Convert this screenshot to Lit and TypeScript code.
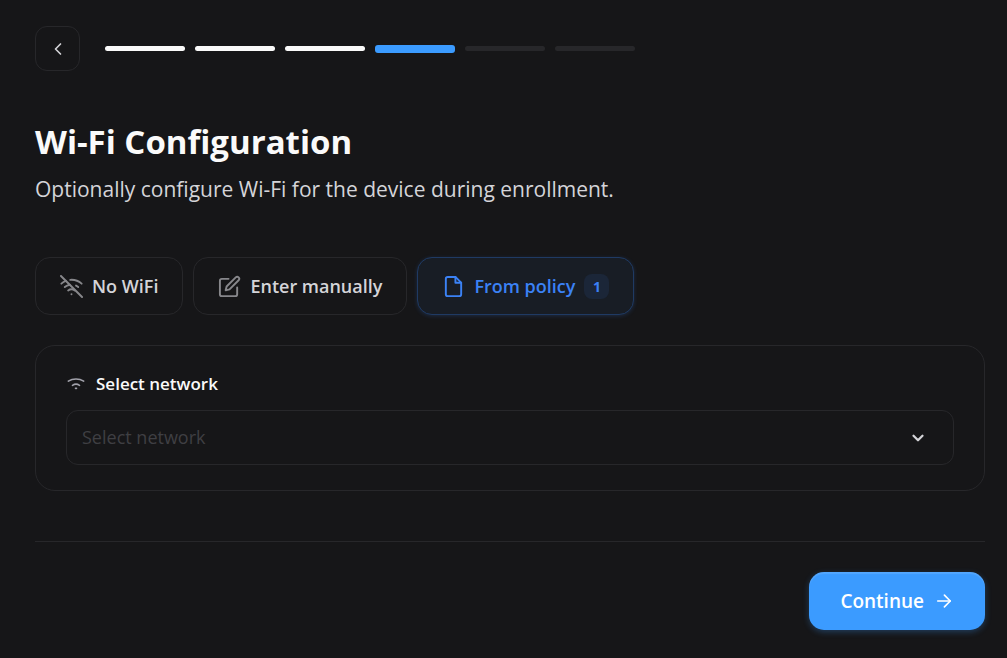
import { LitElement, html, css, svg } from "lit";
import { customElement, property, state } from "lit/decorators.js";
import { classMap } from "lit/directives/class-map.js";

type Mode = "none" | "manual" | "policy";

const icons = {
  back: svg`<path d="m15 18-6-6 6-6" />`,
  down: svg`<path d="m6 9 6 6 6-6" />`,
  arrow: svg`<path d="M4.5 12h15" /><path d="m12.5 5 7 7-7 7" />`,
  wifi: svg`<path d="M2.8 8.6a15 12.5 0 0 1 18.4 0" /><path d="M7.8 13.6a7 6 0 0 1 8.4 0" /><path d="M11.4 17.2h1.2" />`,
  wifiOff: svg`<path d="m1 1 22 22" /><path d="M16.72 11.06A10.94 10.94 0 0 1 19 12.55" /><path d="M5 12.55a10.94 10.94 0 0 1 5.17-2.39" /><path d="M10.71 5.05A16 16 0 0 1 22.58 9" /><path d="M1.42 9a15.91 15.91 0 0 1 4.7-2.88" /><path d="M8.53 16.11a6 6 0 0 1 6.95 0" /><path d="M12 20h.01" />`,
  edit: svg`<path d="M11 4H4a2 2 0 0 0-2 2v14a2 2 0 0 0 2 2h14a2 2 0 0 0 2-2v-7" /><path d="M18.5 2.5a2.12 2.12 0 0 1 3 3L12 15l-4 1 1-4Z" />`,
  file: svg`<path d="M14 2H6a2 2 0 0 0-2 2v16a2 2 0 0 0 2 2h12a2 2 0 0 0 2-2V8Z" /><path d="M14 2v6h6" />`,
};

@customElement("wifi-icon")
export class WifiIcon extends LitElement {
  @property() name: keyof typeof icons = "wifi";

  static styles = css`
    :host {
      display: inline-flex;
      flex: none;
    }
    .glyph {
      width: 100%;
      height: 100%;
      fill: none;
      stroke: currentColor;
      stroke-width: var(--stroke, 2);
      stroke-linecap: round;
      stroke-linejoin: round;
    }
  `;

  render() {
    return html`<svg class="glyph" viewBox="0 0 24 24" aria-hidden="true">${icons[this.name]}</svg>`;
  }
}

@customElement("app-root")
export class AppRoot extends LitElement {
  @state() private mode: Mode = "policy";
  private readonly steps = 6;
  private readonly current = 4;

  static styles = css`
    :host {
      display: block;
      box-sizing: border-box;
      min-height: 100vh;
      padding: 26px 22px 28px 35px;
      background: #161618;
      color: #fafafa;
      font-family: "Open Sans", "Noto Sans", sans-serif;
      font-size: 18px;
      line-height: 26px;
    }
    *,
    *::before {
      box-sizing: border-box;
    }
    button,
    select {
      font: inherit;
      color: inherit;
      background: transparent;
      margin: 0;
      cursor: pointer;
    }
    .top {
      display: flex;
      align-items: center;
      gap: 25px;
    }
    .back {
      display: grid;
      place-items: center;
      width: 45px;
      height: 45px;
      padding: 0;
      border: 1px solid #27272a;
      border-radius: 12px;
      color: #d4d4d8;
    }
    .back wifi-icon {
      width: 20px;
      height: 20px;
    }
    .steps {
      display: flex;
      align-items: center;
      gap: 10px;
      margin: 0;
      padding: 0;
      list-style: none;
    }
    .step {
      width: 80px;
      height: 5px;
      border-radius: 3px;
      background: #27272a;
    }
    .step.done {
      background: #fafafa;
    }
    .step.active {
      height: 8px;
      border-radius: 3px;
      background: #3b9bff;
    }
    .title {
      margin: 46px 0 0;
      font-size: 33px;
      line-height: 50px;
      font-weight: 700;
    }
    .lead {
      margin: 6px 0 0;
      font-size: 21px;
      line-height: 32px;
      color: #d4d4d8;
    }
    .modes {
      display: flex;
      flex-wrap: wrap;
      gap: 10px;
      margin-top: 52px;
    }
    .mode {
      display: flex;
      align-items: center;
      gap: 9px;
      height: 58px;
      padding: 0 24px;
      border: 1px solid #27272a;
      border-radius: 15px;
      color: #d4d4d8;
      font-weight: 600;
    }
    .mode wifi-icon {
      width: 23px;
      height: 23px;
      color: #87878b;
    }
    .mode.selected {
      border-color: #1f3a63;
      background: #181d25;
      color: #3b82f6;
      box-shadow: 0 1px 4px rgb(59 130 246 / 0.2);
    }
    .mode.selected wifi-icon {
      color: #3b82f6;
    }
    .count {
      min-width: 25px;
      height: 25px;
      border-radius: 8px;
      background: #1b2638;
      font-size: 14px;
      line-height: 25px;
      font-weight: 700;
      text-align: center;
    }
    .card {
      margin-top: 30px;
      padding: 25px 30px;
      border: 1px solid #27272a;
      border-radius: 20px;
    }
    .label {
      display: flex;
      align-items: center;
      gap: 10px;
      font-size: 17px;
      font-weight: 600;
    }
    .label wifi-icon {
      width: 20px;
      height: 20px;
      color: #a1a1aa;
    }
    .field {
      display: grid;
      align-items: center;
      margin-top: 13px;
    }
    .select {
      grid-area: 1 / 1;
      appearance: none;
      width: 100%;
      height: 55px;
      padding: 0 50px 2px 15px;
      border: 1px solid #27272a;
      border-radius: 12px;
      color: #3f3f43;
    }
    .field wifi-icon {
      --stroke: 3;
      grid-area: 1 / 1;
      justify-self: end;
      width: 18px;
      height: 18px;
      margin-right: 27px;
      color: #d4d4d8;
      pointer-events: none;
    }
    .actions {
      display: flex;
      justify-content: flex-end;
      margin-top: 50px;
      padding-top: 30px;
      border-top: 1px solid #27272a;
    }
    .continue {
      display: flex;
      align-items: center;
      gap: 10px;
      height: 58px;
      padding: 0 31px;
      border: 0;
      border-radius: 15px;
      background: #3b9bff;
      color: #ffffff;
      font-size: 19px;
      font-weight: 600;
      box-shadow: 0 2px 6px rgb(59 155 255 / 0.3), inset 0 2px 1px rgb(255 255 255 / 0.12);
    }
    .continue wifi-icon {
      width: 20px;
      height: 20px;
    }
  `;

  private modeButton(mode: Mode, icon: string, label: string, count?: number) {
    const selected = this.mode === mode;
    return html`<button
      type="button"
      class=${classMap({ mode: true, selected })}
      aria-pressed=${selected ? "true" : "false"}
      @click=${() => (this.mode = mode)}
    >
      <wifi-icon name=${icon}></wifi-icon>
      <span>${label}</span>
      ${count ? html`<span class="count">${count}</span>` : ""}
    </button>`;
  }

  render() {
    return html`
      <header class="top">
        <button type="button" class="back" aria-label="Back"><wifi-icon name="back"></wifi-icon></button>
        <ol class="steps">
          ${Array.from({ length: this.steps }, (_, i) => i + 1).map(
            (n) => html`<li class=${classMap({ step: true, done: n < this.current, active: n === this.current })}></li>`
          )}
        </ol>
      </header>
      <main>
        <h1 class="title">Wi-Fi Configuration</h1>
        <p class="lead">Optionally configure Wi-Fi for the device during enrollment.</p>
        <div class="modes">
          ${this.modeButton("none", "wifiOff", "No WiFi")}
          ${this.modeButton("manual", "edit", "Enter manually")}
          ${this.modeButton("policy", "file", "From policy", 1)}
        </div>
        <section class="card">
          <label class="label" for="network"><wifi-icon name="wifi"></wifi-icon>Select network</label>
          <div class="field">
            <select id="network" class="select">
              <option value="" disabled selected hidden>Select network</option>
            </select>
            <wifi-icon name="down"></wifi-icon>
          </div>
        </section>
      </main>
      <footer class="actions">
        <button type="button" class="continue">Continue<wifi-icon name="arrow"></wifi-icon></button>
      </footer>
    `;
  }
}
